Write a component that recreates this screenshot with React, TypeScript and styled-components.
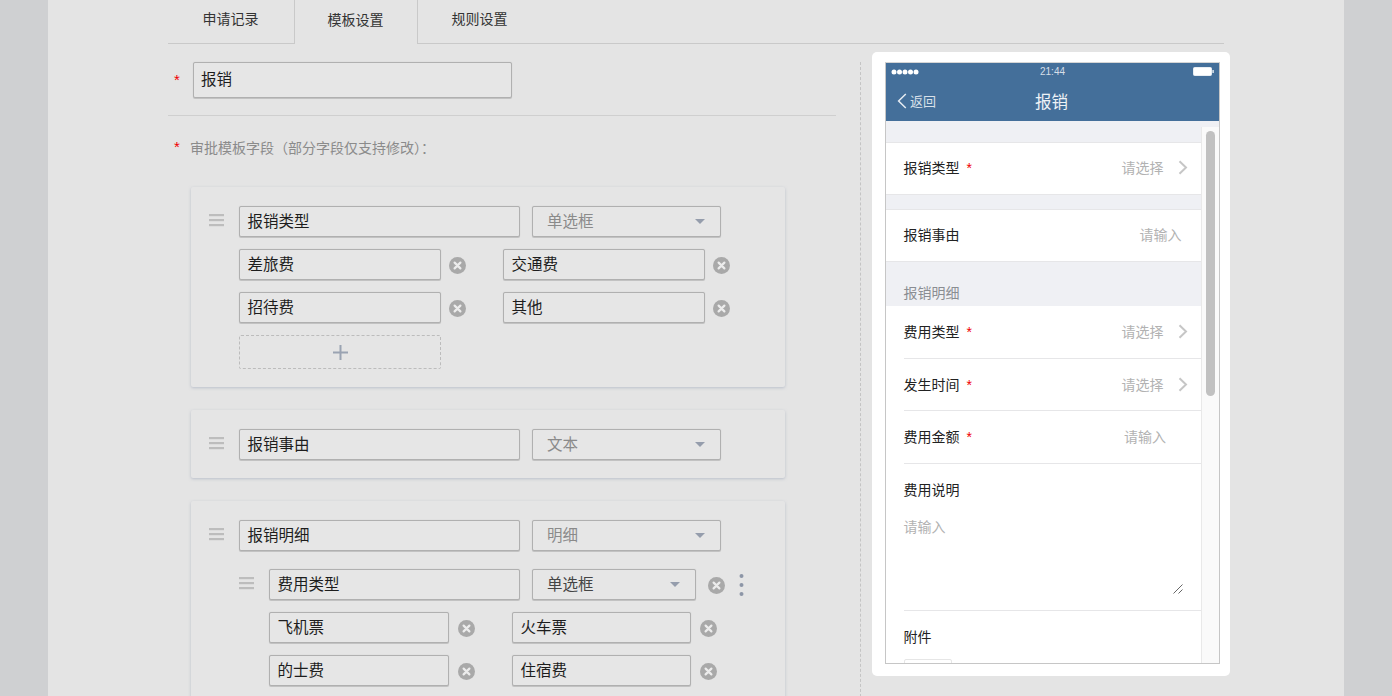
import React from "react";
import styled, { createGlobalStyle } from "styled-components";

const Global = createGlobalStyle`
  html, body { margin: 0; padding: 0; height: 696px; overflow: hidden; }
  body { background: #cfd0d2; font-family: "Noto Sans CJK SC", "Liberation Sans", sans-serif; }
  * { box-sizing: border-box; }
`;

const Stage = styled.div`
  height: 696px;
  overflow: hidden;
  padding: 0 48px;
`;
const Main = styled.main`
  height: 696px;
  background: #e4e4e4;
  padding: 0 120px;
`;
const TabBar = styled.nav`
  display: flex;
  height: 44px;
  border-bottom: 1px solid #c9c9c9;
`;
const Tab = styled.div<{ $active?: boolean }>`
  width: 124px;
  height: ${(p) => (p.$active ? "44px" : "43px")};
  flex: none;
  display: flex;
  align-items: center;
  justify-content: center;
  padding: 0 1px 7px 0;
  font-size: 14px;
  color: #333;
  background: #e4e4e4;
  ${(p) => p.$active && "border-left: 1px solid #c9c9c9; border-right: 1px solid #c9c9c9;"}
`;
const FirstTab = styled(Tab)`
  width: 126px;
`;
const Columns = styled.div`
  display: flex;
  align-items: flex-start;
`;
const Left = styled.section`
  width: 668px;
  flex: none;
`;
const TitleRow = styled.div`
  display: flex;
  align-items: center;
  margin-top: 18px;
  padding-left: 6px;
`;
const Star = styled.span`
  color: #f00000;
  font: 15px/1 "Liberation Sans", sans-serif;
  width: 19px;
  flex: none;
  position: relative;
  top: -1px;
`;
const Box = styled.div<{ $w: number }>`
  width: ${(p) => p.$w}px;
  height: 31px;
  flex: none;
  display: flex;
  align-items: center;
  padding: 0 7.5px 4px;
  border: 1px solid #b0b0b0;
  border-radius: 2px;
  background: #e6e6e6;
  box-shadow: 0 1px 0 #c2c2c2, 0 0 1px #c2c2c2;
  font-size: 15.5px;
  color: #1d1d1d;
`;
const TitleBox = styled(Box)`
  height: 36px;
  padding: 0 7px 5px;
`;
const Rule = styled.hr`
  border: 0;
  border-top: 1px solid #cfcfcf;
  margin: 17px 0 0;
`;
const FieldsLabel = styled.div`
  display: flex;
  align-items: center;
  height: 20px;
  margin: 21px 0 30px;
  padding-left: 6px;
  font-size: 14px;
  color: #8b8b8b;
`;
const FieldsStar = styled(Star)`
  width: 16px;
`;
const Card = styled.div`
  width: 594px;
  margin: 0 0 23px 23px;
  padding: 19px 18px 18px;
  background: #e5e5e5;
  border-radius: 2px;
  box-shadow: 0 1px 3px rgba(146, 158, 180, 0.5);
`;
const Row = styled.div<{ $indent?: number }>`
  display: flex;
  align-items: center;
  margin-left: ${(p) => p.$indent ?? 0}px;
`;
const SubRow = styled(Row)`
  margin-top: 18px;
`;
const DragSlot = styled.div`
  width: 15px;
  margin-right: 15px;
  flex: none;
  display: flex;
  margin-bottom: 3px;
`;
const SelectBox = styled(Box)<{ $strong?: boolean }>`
  margin-left: 12px;
  padding: 0 15px 4px 14px;
  justify-content: space-between;
  color: ${(p) => (p.$strong ? "#444" : "#8a8a8a")};
`;
const CaretSlot = styled.span`
  display: flex;
  margin-top: 4px;
`;
const Options = styled.div<{ $indent: number; $cols: string }>`
  display: grid;
  grid-template-columns: ${(p) => p.$cols};
  row-gap: 12px;
  margin: 12px 0 0 ${(p) => p.$indent}px;
`;
const Option = styled.div<{ $gap: number }>`
  display: flex;
  align-items: center;
  gap: ${(p) => p.$gap}px;
`;
const RemoveSlot = styled.span`
  display: flex;
  margin-top: 1px;
`;
const AddBox = styled.div`
  width: 202px;
  height: 34px;
  margin: 12px 0 0 30px;
  display: flex;
  align-items: center;
  justify-content: center;
  border: 1px dashed #bcbcbc;
  border-radius: 2px;
`;
const RowRemove = styled.span`
  display: flex;
  margin: 1px 0 0 12px;
`;
const Dots = styled.span`
  display: flex;
  margin-left: 14px;
`;
const DashLine = styled.div`
  width: 1px;
  height: 640px;
  flex: none;
  margin: 18px 0 0 24px;
  border-left: 1px dashed #c4c4c4;
`;
const PreviewCard = styled.aside`
  width: 358px;
  height: 624px;
  flex: none;
  margin: 8px 0 0 11px;
  padding: 10px 10px 12px 13px;
  background: #fff;
  border-radius: 5px;
`;
const Phone = styled.div`
  height: 602px;
  border: 1px solid #c6c6c6;
  border-top-color: #d5d5d5;
  display: flex;
  flex-direction: column;
  overflow: hidden;
  background: #fff;
`;
const Header = styled.header`
  height: 58px;
  flex: none;
  background: #446f9a;
  color: #fff;
`;
const StatusBar = styled.div`
  height: 17px;
  display: grid;
  grid-template-columns: 1fr auto 1fr;
  align-items: center;
  padding: 0 5px 0 5px;
  font: 10px "Liberation Sans", sans-serif;
  color: #d6dee7;
`;
const StatusRight = styled.div`
  display: flex;
  justify-content: flex-end;
`;
const StatusLeft = styled.div`
  display: flex;
`;
const Nav = styled.div`
  height: 41px;
  display: grid;
  grid-template-columns: 1fr auto 1fr;
  align-items: center;
  padding-right: 2px;
`;
const Back = styled.div`
  display: flex;
  align-items: center;
  gap: 3px;
  margin-left: 11px;
  font-size: 13px;
  color: #d8e0e9;
`;
const NavTitle = styled.div`
  font-size: 16.5px;
  color: #eef2f6;
`;
const PhoneBody = styled.div`
  flex: 1;
  min-height: 0;
  display: flex;
  background: #eff0f4;
`;
const Scroll = styled.div`
  flex: 1;
  min-width: 0;
  padding-top: 21px;
  overflow: hidden;
`;
const Track = styled.div`
  width: 18px;
  flex: none;
  margin-top: 6px;
  padding: 4px 4px 0 4px;
  background: #fafafa;
  border-left: 1px solid #e9e9e9;
`;
const Thumb = styled.div`
  height: 265px;
  background: #c1c1c1;
  border-radius: 5px;
`;
const PRow = styled.div<{ $pr: number; $gap?: boolean }>`
  height: 53px;
  display: flex;
  align-items: center;
  padding: 0 ${(p) => p.$pr}px 4px 17.5px;
  margin-bottom: ${(p) => (p.$gap ? "14px" : "0")};
  background: #fff;
  border-top: 1px solid #e6e6e8;
  border-bottom: 1px solid #e6e6e8;
  font-size: 14px;
  color: #222;
`;
const GroupLabel = styled.div`
  height: 44px;
  display: flex;
  align-items: flex-end;
  padding: 0 0 4px 17.5px;
  font-size: 14px;
  color: #8a8d92;
`;
const Group = styled.div`
  background: #fff;
  padding-left: 17.5px;
`;
const GRow = styled.div<{ $pr: number }>`
  height: 52.6px;
  display: flex;
  align-items: center;
  padding: 0 ${(p) => p.$pr}px 1px 0;
  border-bottom: 1px solid #e6e6e8;
  font-size: 14px;
  color: #222;
`;
const PStar = styled.span`
  color: #f00000;
  font: 14px/1 "Liberation Sans", sans-serif;
  margin-left: 7px;
  position: relative;
  top: 1px;
`;
const Hint = styled.span`
  margin-left: auto;
  color: #b2b2b2;
`;
const Chevron = styled.span`
  display: flex;
  margin: 1px 0 0 14.5px;
`;
const NoteRow = styled.div`
  height: 147.6px;
  position: relative;
  padding-top: 15px;
  border-bottom: 1px solid #e6e6e8;
  font-size: 14px;
  color: #222;
`;
const NoteHint = styled.div`
  margin-top: 17px;
  color: #b2b2b2;
`;
const Grip = styled.span`
  position: absolute;
  right: 18px;
  bottom: 16px;
  display: flex;
`;
const FileRow = styled.div`
  padding-top: 15px;
  font-size: 14px;
  color: #222;
`;
const Thumbnail = styled.div`
  width: 48px;
  height: 40px;
  margin-top: 13px;
  border: 1px solid #e6e6e6;
  border-radius: 2px;
`;

const DragIcon = () => (
  <svg width="15" height="13" viewBox="0 0 15 13" fill="#bdbdbd">
    <rect y="0" width="15" height="2.2" />
    <rect y="5" width="15" height="2.2" />
    <rect y="10" width="15" height="2.2" />
  </svg>
);
const CloseIcon = () => (
  <svg width="17" height="17" viewBox="0 0 17 17">
    <circle cx="8.5" cy="8.5" r="8.5" fill="#a9a9a9" />
    <path d="M5.6 5.6l5.8 5.8M11.4 5.6l-5.8 5.8" stroke="#ececec" strokeWidth="2.2" strokeLinecap="round" />
  </svg>
);
const Caret = () => (
  <CaretSlot>
    <svg width="10" height="5" viewBox="0 0 10 5">
      <path d="M0 0h10L5 5z" fill="#959dac" />
    </svg>
  </CaretSlot>
);
const Plus = () => (
  <svg width="15" height="15" viewBox="0 0 15 15">
    <path d="M7.5 0v15M0 7.5h15" stroke="#9aa3b2" strokeWidth="2" />
  </svg>
);
const VDots = () => (
  <svg width="5" height="24" viewBox="0 0 5 24" fill="#8d96a7">
    <circle cx="2.5" cy="3" r="2" />
    <circle cx="2.5" cy="12" r="2" />
    <circle cx="2.5" cy="21" r="2" />
  </svg>
);
const RightChevron = () => (
  <svg width="10" height="15" viewBox="0 0 10 15" fill="none">
    <path d="M1.5 1.2L8 7.5l-6.5 6.3" stroke="#c6c6c6" strokeWidth="2" />
  </svg>
);
const BackChevron = () => (
  <svg width="10" height="16" viewBox="0 0 10 16" fill="none">
    <path d="M8.8 1L1.6 8l7.2 7" stroke="#e6ecf2" strokeWidth="1.5" />
  </svg>
);
const Signal = () => (
  <svg width="28" height="6" viewBox="0 0 28 6" fill="#fff">
    {[3, 8.5, 14, 19.5, 25].map((x) => (
      <circle key={x} cx={x} cy="3" r="2.5" />
    ))}
  </svg>
);
const Battery = () => (
  <svg width="21" height="9" viewBox="0 0 21 9">
    <rect x="0.5" y="0.5" width="18" height="8" rx="1" fill="#fff" stroke="#e8edf2" />
    <rect x="19.4" y="3" width="1.4" height="3" fill="#e8edf2" />
  </svg>
);
const ResizeGrip = () => (
  <svg width="10" height="10" viewBox="0 0 10 10" fill="none" stroke="#666" strokeWidth="1">
    <path d="M0.5 9.5L9.5 0.5M5.5 9.5L9.5 5.5" />
  </svg>
);

const Opt = ({ text, w, gap }: { text: string; w: number; gap: number }) => (
  <Option $gap={gap}>
    <Box $w={w}>{text}</Box>
    <RemoveSlot>
      <CloseIcon />
    </RemoveSlot>
  </Option>
);

const FieldHead = ({ name, type }: { name: string; type: string }) => (
  <Row>
    <DragSlot>
      <DragIcon />
    </DragSlot>
    <Box $w={281}>{name}</Box>
    <SelectBox $w={189}>
      {type}
      <Caret />
    </SelectBox>
  </Row>
);

export default function App() {
  return (
    <Stage>
      <Global />
      <Main>
        <TabBar>
          <FirstTab>申请记录</FirstTab>
          <Tab $active>模板设置</Tab>
          <Tab>规则设置</Tab>
        </TabBar>
        <Columns>
          <Left>
            <TitleRow>
              <Star>*</Star>
              <TitleBox $w={319}>报销</TitleBox>
            </TitleRow>
            <Rule />
            <FieldsLabel>
              <FieldsStar>*</FieldsStar>
              审批模板字段（部分字段仅支持修改）：
            </FieldsLabel>
            <Card>
              <FieldHead name="报销类型" type="单选框" />
              <Options $indent={30} $cols="264px 264px">
                <Opt text="差旅费" w={202} gap={8} />
                <Opt text="交通费" w={202} gap={8} />
                <Opt text="招待费" w={202} gap={8} />
                <Opt text="其他" w={202} gap={8} />
              </Options>
              <AddBox>
                <Plus />
              </AddBox>
            </Card>
            <Card>
              <FieldHead name="报销事由" type="文本" />
            </Card>
            <Card>
              <FieldHead name="报销明细" type="明细" />
              <SubRow $indent={30}>
                <DragSlot>
                  <DragIcon />
                </DragSlot>
                <Box $w={251}>费用类型</Box>
                <SelectBox $w={164} $strong>
                  单选框
                  <Caret />
                </SelectBox>
                <RowRemove>
                  <CloseIcon />
                </RowRemove>
                <Dots>
                  <VDots />
                </Dots>
              </SubRow>
              <Options $indent={60} $cols="243px 243px">
                <Opt text="飞机票" w={180} gap={9} />
                <Opt text="火车票" w={179} gap={9} />
                <Opt text="的士费" w={180} gap={9} />
                <Opt text="住宿费" w={179} gap={9} />
              </Options>
            </Card>
          </Left>
          <DashLine />
          <PreviewCard>
            <Phone>
              <Header>
                <StatusBar>
                  <StatusLeft>
                    <Signal />
                  </StatusLeft>
                  21:44
                  <StatusRight>
                    <Battery />
                  </StatusRight>
                </StatusBar>
                <Nav>
                  <Back>
                    <BackChevron />
                    返回
                  </Back>
                  <NavTitle>报销</NavTitle>
                </Nav>
              </Header>
              <PhoneBody>
                <Scroll>
                  <PRow $pr={13} $gap>
                    报销类型
                    <PStar>*</PStar>
                    <Hint>请选择</Hint>
                    <Chevron>
                      <RightChevron />
                    </Chevron>
                  </PRow>
                  <PRow $pr={19.5}>
                    报销事由
                    <Hint>请输入</Hint>
                  </PRow>
                  <GroupLabel>报销明细</GroupLabel>
                  <Group>
                    <GRow $pr={13}>
                      费用类型
                      <PStar>*</PStar>
                      <Hint>请选择</Hint>
                      <Chevron>
                        <RightChevron />
                      </Chevron>
                    </GRow>
                    <GRow $pr={13}>
                      发生时间
                      <PStar>*</PStar>
                      <Hint>请选择</Hint>
                      <Chevron>
                        <RightChevron />
                      </Chevron>
                    </GRow>
                    <GRow $pr={35}>
                      费用金额
                      <PStar>*</PStar>
                      <Hint>请输入</Hint>
                    </GRow>
                    <NoteRow>
                      费用说明
                      <NoteHint>请输入</NoteHint>
                      <Grip>
                        <ResizeGrip />
                      </Grip>
                    </NoteRow>
                    <FileRow>
                      附件
                      <Thumbnail />
                    </FileRow>
                  </Group>
                </Scroll>
                <Track>
                  <Thumb />
                </Track>
              </PhoneBody>
            </Phone>
          </PreviewCard>
        </Columns>
      </Main>
    </Stage>
  );
}
